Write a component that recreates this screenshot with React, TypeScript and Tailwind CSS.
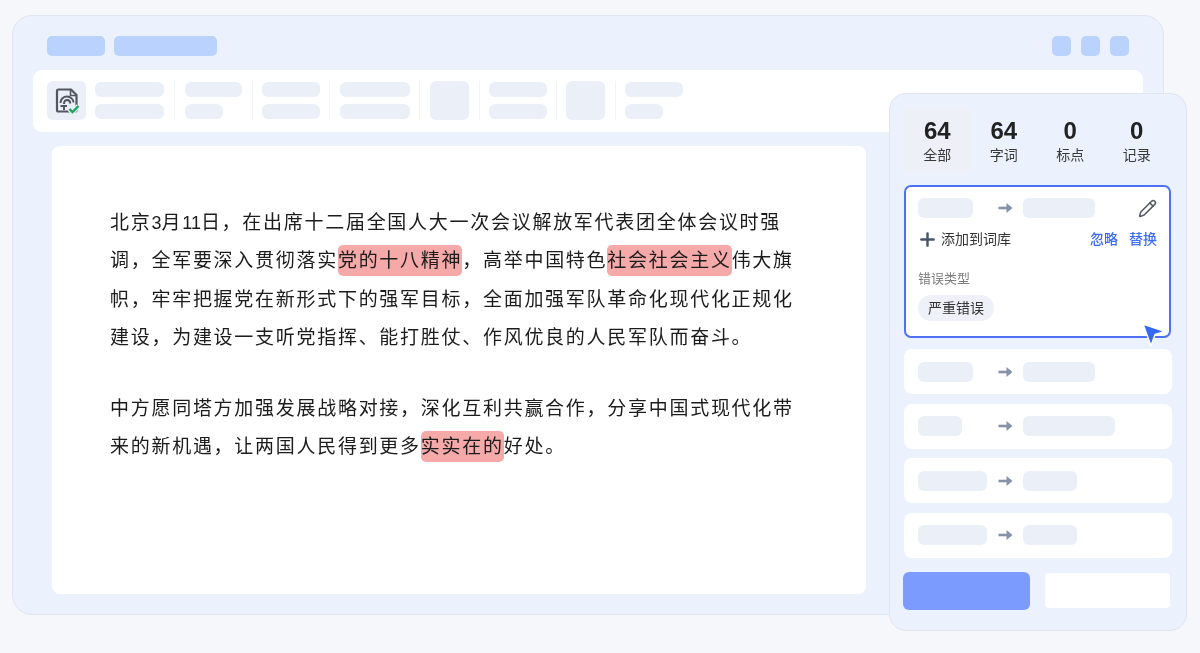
import { Pencil, Plus } from "lucide-react";

const fontStack = "[font-family:'Liberation_Sans','Noto_Sans_CJK_SC',sans-serif]";

const Bar = ({ className }: { className: string }) => (
  <div className={`bg-[#ebf0f8] rounded-[6px] ${className}`} />
);

const Divider = () => <div className="w-px h-[39px] bg-[#f2f4f9] shrink-0" />;

const TwoBars = ({ top, bottom }: { top: string; bottom: string }) => (
  <div className="flex flex-col gap-[7px] shrink-0">
    <Bar className={`h-[15px] ${top}`} />
    <Bar className={`h-[15px] ${bottom}`} />
  </div>
);

const Square = () => <div className="w-[39px] h-[39px] bg-[#ebf0f8] rounded-[6px] shrink-0" />;

const Mark = ({ children }: { children: string }) => (
  <span className="bg-[#f5a9a9] rounded-[5px] py-[5px]">{children}</span>
);

const Num = ({ children }: { children: string }) => (
  <span className="text-[18px] tracking-normal">{children}</span>
);

const FileIcon = () => (
  <svg width="30" height="30" viewBox="0 0 30 30" fill="none">
    <path
      d="M6.500 3.500h12.500l5.500 5.500v15a1.500 1.500 0 0 1-1.500 1.500H6.500A1.500 1.500 0 0 1 5 24V5a1.500 1.500 0 0 1 1.500-1.500z"
      stroke="#54575f"
      strokeWidth="2.200"
      strokeLinejoin="round"
    />
    <path d="M18.500 3.500v6h6" stroke="#54575f" strokeWidth="1.600" />
    <path
      d="M8.500 17c0-4 3-6.500 6.500-6.500s6.500 3 6.500 6M12 18c0-2.500 1.300-4 3.200-4s3 1.500 3 3.500M8.500 20h6.500M12 20v4"
      stroke="#54575f"
      strokeWidth="2"
    />
    <path d="M17.500 23l3 3 6-6" stroke="#ebf0f8" strokeWidth="5" />
    <path d="M17.500 23l3 3 6-6" stroke="#19a35b" strokeWidth="2.400" />
  </svg>
);

const Arrow = () => (
  <svg width="15" height="12" viewBox="0 0 15 12" fill="none" className="shrink-0">
    <path d="M0.500 6h9" stroke="#8592a8" strokeWidth="2.600" />
    <path d="M8.500 1l6 5-6 5z" fill="#8592a8" />
  </svg>
);

const Row = ({ left, right, gap }: { left: string; right: string; gap: string }) => (
  <div className="h-[45px] w-[268px] bg-white rounded-[8px] flex items-center pl-[14px]">
    <Bar className={`h-[20px] ${left}`} />
    <div className={`flex items-center ${gap}`}>
      <Arrow />
    </div>
    <Bar className={`h-[20px] ml-[10px] ${right}`} />
  </div>
);

const stats = [
  { n: "64", label: "全部", active: true },
  { n: "64", label: "字词", active: false },
  { n: "0", label: "标点", active: false },
  { n: "0", label: "记录", active: false },
];

export default function App() {
  return (
    <div className={`relative w-[1200px] h-[653px] overflow-hidden bg-[#f5f7fb] pt-[15px] pl-[12px] blur-[0.35px] ${fontStack}`}>
      {/* main window */}
      <div className="w-[1152px] h-[600px] bg-[#ebf2fe] border border-[#dfe5f1] rounded-[20px] pt-[20px]">
        <div className="flex items-center justify-between pl-[34px] pr-[34px]">
          <div className="flex gap-[9px]">
            <div className="w-[58px] h-[20px] bg-[#b9d3fe] rounded-[5px]" />
            <div className="w-[103px] h-[20px] bg-[#b9d3fe] rounded-[5px]" />
          </div>
          <div className="flex gap-[10px]">
            <div className="w-[19px] h-[20px] bg-[#b9d3fe] rounded-[5px]" />
            <div className="w-[19px] h-[20px] bg-[#b9d3fe] rounded-[5px]" />
            <div className="w-[19px] h-[20px] bg-[#b9d3fe] rounded-[5px]" />
          </div>
        </div>

        {/* toolbar */}
        <div className="mt-[14px] ml-[20px] w-[1110px] h-[62px] bg-white rounded-[9px] flex items-center pl-[14px] pb-[1px]">
          <div className="w-[39px] h-[39px] bg-[#ebf0f8] rounded-[6px] flex items-center justify-center shrink-0">
            <FileIcon />
          </div>
          <div className="ml-[9px]"><TwoBars top="w-[69px]" bottom="w-[69px]" /></div>
          <div className="ml-[10px]"><Divider /></div>
          <div className="ml-[10px]"><TwoBars top="w-[57px]" bottom="w-[38px]" /></div>
          <div className="ml-[10px]"><Divider /></div>
          <div className="ml-[9px]"><TwoBars top="w-[58px]" bottom="w-[58px]" /></div>
          <div className="ml-[9px]"><Divider /></div>
          <div className="ml-[10px]"><TwoBars top="w-[70px]" bottom="w-[70px]" /></div>
          <div className="ml-[9px]"><Divider /></div>
          <div className="ml-[10px]"><Square /></div>
          <div className="ml-[10px]"><Divider /></div>
          <div className="ml-[9px]"><TwoBars top="w-[58px]" bottom="w-[58px]" /></div>
          <div className="ml-[9px]"><Divider /></div>
          <div className="ml-[9px]"><Square /></div>
          <div className="ml-[10px]"><Divider /></div>
          <div className="ml-[9px]"><TwoBars top="w-[58px]" bottom="w-[38px]" /></div>
        </div>

        {/* document */}
        <div className="mt-[14px] ml-[39px] w-[814px] h-[448px] bg-white rounded-[8px] pt-[58px] pl-[58px] text-[19px] leading-[38.400px] tracking-[1.720px] text-[#1c1c1c] whitespace-nowrap">
          <p>
            北京<Num>3</Num>月<Num>11</Num>日，在出席十二届全国人大一次会议解放军代表团全体会议时强
            <br />
            调，全军要深入贯彻落实<Mark>党的十八精神</Mark>，高举中国特色<Mark>社会社会主义</Mark>伟大旗
            <br />
            帜，牢牢把握党在新形式下的强军目标，全面加强军队革命化现代化正规化
            <br />
            建设，为建设一支听党指挥、能打胜仗、作风优良的人民军队而奋斗。
          </p>
          <p className="mt-[32px]">
            中方愿同塔方加强发展战略对接，深化互利共赢合作，分享中国式现代化带
            <br />
            来的新机遇，让两国人民得到更多<Mark>实实在的</Mark>好处。
          </p>
        </div>
      </div>

      {/* floating check panel */}
      <div className="absolute left-[889px] top-[93px] w-[298px] h-[538px] bg-[#ebf2fe] border border-[#dfe5f1] rounded-[17px] pt-[13px] pl-[14px]">
        <div className="grid grid-cols-4 w-[266px]">
          {stats.map((s) => (
            <div
              key={s.label}
              className={`h-[66px] flex flex-col items-center pt-[10px] rounded-[6px] ${s.active ? "bg-[#edf0f7]" : ""}`}
            >
              <div className="text-[24px] leading-[28px] font-bold text-[#222222]">{s.n}</div>
              <div className="text-[14px] leading-[18px] mt-[1px] text-[#383838]">{s.label}</div>
            </div>
          ))}
        </div>

        {/* selected item */}
        <div className="relative mt-[12px] w-[267px] h-[153px] bg-white border-2 border-[#4d70f5] rounded-[7px] pt-[11px] pl-[12px]">
          <div className="flex items-center">
            <Bar className="w-[55px] h-[20px]" />
            <div className="ml-[25px]">
              <Arrow />
            </div>
            <Bar className="ml-[10px] w-[72px] h-[20px]" />
            <Pencil size={19} strokeWidth={2} className="ml-[43px] text-[#555a63]" />
          </div>
          <div className="flex items-center mt-[10px] h-[22px]">
            <Plus size={21} strokeWidth={2.800} className="-ml-[1px] text-[#45546b]" />
            <span className="ml-[3px] text-[14px] text-[#333333]">添加到词库</span>
            <span className="ml-[79px] text-[14px] font-medium text-[#3c6cf2]">忽略</span>
            <span className="ml-[11px] text-[14px] font-medium text-[#3c6cf2]">替换</span>
          </div>
          <div className="mt-[20px] text-[13px] leading-[18px] text-[#7d7d7d]">错误类型</div>
          <div className="mt-[7px] w-[76px] h-[26px] rounded-full bg-[#eef2f8] flex items-center justify-center text-[14px] text-[#333333]">
            严重错误
          </div>
          <svg
            className="absolute left-[234px] top-[135px]"
            width="28"
            height="27"
            viewBox="0 0 28 27"
            fill="none"
          >
            <path d="M3 2l22 7.500-10 3L11 24z" fill="#3468f6" stroke="#ffffff" strokeWidth="1.500" strokeLinejoin="round" />
          </svg>
        </div>

        <div className="mt-[11px] flex flex-col gap-[9.500px]">
          <Row left="w-[55px]" right="w-[72px]" gap="ml-[25px]" />
          <Row left="w-[44px]" right="w-[92px]" gap="ml-[36px]" />
          <Row left="w-[69px]" right="w-[54px]" gap="ml-[11px]" />
          <Row left="w-[69px]" right="w-[54px]" gap="ml-[11px]" />
        </div>

        <div className="mt-[14px] -ml-[1px] flex items-center w-[267px] justify-between">
          <div className="w-[127px] h-[38px] bg-[#7c9bff] rounded-[6px]" />
          <div className="w-[125px] h-[35px] bg-white rounded-[4px]" />
        </div>
      </div>
    </div>
  );
}
